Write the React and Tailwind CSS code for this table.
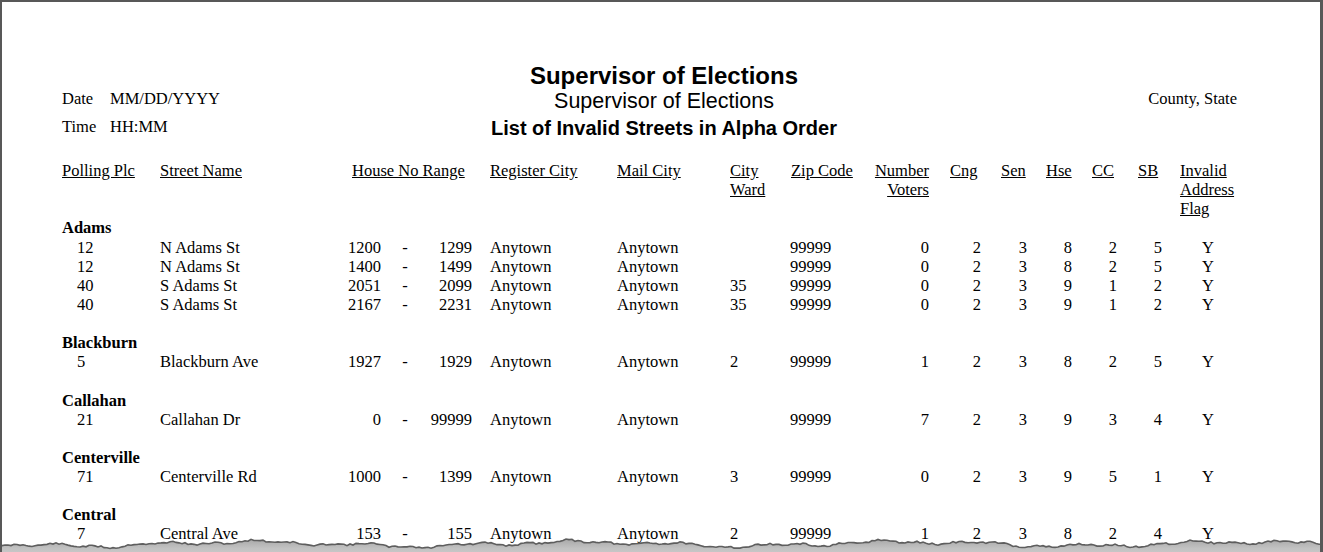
import React from "react";

const groups = [
  {
    name: "Adams",
    rows: [
      ["12", "N Adams St", "1200", "1299", "Anytown", "Anytown", "", "99999", "0", "2", "3", "8", "2", "5", "Y"],
      ["12", "N Adams St", "1400", "1499", "Anytown", "Anytown", "", "99999", "0", "2", "3", "8", "2", "5", "Y"],
      ["40", "S Adams St", "2051", "2099", "Anytown", "Anytown", "35", "99999", "0", "2", "3", "9", "1", "2", "Y"],
      ["40", "S Adams St", "2167", "2231", "Anytown", "Anytown", "35", "99999", "0", "2", "3", "9", "1", "2", "Y"],
    ],
  },
  {
    name: "Blackburn",
    rows: [["5", "Blackburn Ave", "1927", "1929", "Anytown", "Anytown", "2", "99999", "1", "2", "3", "8", "2", "5", "Y"]],
  },
  {
    name: "Callahan",
    rows: [["21", "Callahan Dr", "0", "99999", "Anytown", "Anytown", "", "99999", "7", "2", "3", "9", "3", "4", "Y"]],
  },
  {
    name: "Centerville",
    rows: [["71", "Centerville Rd", "1000", "1399", "Anytown", "Anytown", "3", "99999", "0", "2", "3", "9", "5", "1", "Y"]],
  },
  {
    name: "Central",
    rows: [["7", "Central Ave", "153", "155", "Anytown", "Anytown", "2", "99999", "1", "2", "3", "8", "2", "4", "Y"]],
  },
];

const GRID =
  "grid grid-cols-[98px_182px_148px_127px_113px_60px_70px_69px_52px_46px_45px_45px_45px_78px]";

// torn paper edge
function tornPath() {
  let seed = 11;
  const rnd = () => {
    seed = (seed * 9301 + 49297) % 233280;
    return seed / 233280;
  };
  const pts = [];
  for (let x = -4; x <= 1330; x += 3) {
    const y =
      544 +
      2.0 * Math.sin(x * 0.019) +
      1.4 * Math.sin(x * 0.061 + 1.3) +
      0.9 * Math.sin(x * 0.16 + 2.1) +
      (rnd() - 0.5) * 1.8;
    pts.push([x, y]);
  }
  const line = pts.map((p, i) => `${i ? "L" : "M"}${p[0]} ${p[1].toFixed(2)}`).join(" ");
  const fill = `${line} L1330 560 L-4 560 Z`;
  return { line, fill };
}
const torn = tornPath();

function Header() {
  return (
    <div className={`${GRID} leading-[19.125px]`}>
      <div className="underline">Polling Plc</div>
      <div className="underline">Street Name</div>
      <div className="pl-[10px] whitespace-nowrap underline">House No Range</div>
      <div className="underline">Register City</div>
      <div className="underline">Mail City</div>
      <div className="underline">
        City
        <br />
        Ward
      </div>
      <div className="pl-[1px] underline whitespace-nowrap">Zip Code</div>
      <div className="text-right underline">
        Number
        <br />
        Voters
      </div>
      <div className="pl-[21px] underline">Cng</div>
      <div className="pl-[20px] underline">Sen</div>
      <div className="pl-[19px] underline">Hse</div>
      <div className="pl-[20px] underline">CC</div>
      <div className="pl-[21px] underline">SB</div>
      <div className="pl-[18px] underline">
        Invalid
        <br />
        Address
        <br />
        Flag
      </div>
    </div>
  );
}

function Row({ r }) {
  return (
    <div className={`${GRID} leading-[19.125px] whitespace-nowrap`}>
      <div className="pl-[15px]">{r[0]}</div>
      <div>{r[1]}</div>
      <div className="flex">
        <span className="w-[39px] text-right">{r[2]}</span>
        <span className="w-[48px] text-center">-</span>
        <span className="w-[43px] text-right">{r[3]}</span>
      </div>
      <div>{r[4]}</div>
      <div>{r[5]}</div>
      <div>{r[6]}</div>
      <div>{r[7]}</div>
      <div className="text-right">{r[8]}</div>
      <div className="text-right">{r[9]}</div>
      <div className="text-right">{r[10]}</div>
      <div className="text-right">{r[11]}</div>
      <div className="text-right">{r[12]}</div>
      <div className="text-right">{r[13]}</div>
      <div className="pl-[18px]">
        <div className="w-[56px] text-center">{r[14]}</div>
      </div>
    </div>
  );
}

export default function App() {
  return (
    <div className="relative h-[552px] w-[1323px] overflow-hidden bg-white border-t-2 border-l-2 border-r-[3px] border-[#585858] text-black font-['Liberation_Serif','Times_New_Roman',serif] text-[16.5px]">
      <div className="pl-[60px] pr-[54px] pt-[61px]">
        {/* report heading */}
        <div className="grid grid-cols-[1fr_auto_1fr]">
          <div className="pt-[22px] leading-[28px]">
            <div className="flex">
              <span className="w-[48px]">Date</span>
              <span>MM/DD/YYYY</span>
            </div>
            <div className="flex">
              <span className="w-[48px]">Time</span>
              <span>HH:MM</span>
            </div>
          </div>
          <div className="flex flex-col items-center font-['Liberation_Sans',Arial,sans-serif] whitespace-nowrap">
            <div className="text-[24px] font-bold leading-[25px]">Supervisor of Elections</div>
            <div className="mt-[1px] text-[21.5px] leading-[25px]">Supervisor of Elections</div>
            <div className="mt-[1px] text-[20px] font-bold leading-[26px]">List of Invalid Streets in Alpha Order</div>
          </div>
          <div className="pt-[22px] pr-[29px] text-right leading-[28px]">County, State</div>
        </div>

        {/* table */}
        <div className="mt-[20px]">
          <Header />
          {groups.map((g, gi) => (
            <div key={g.name} className={gi ? "mt-[19.125px]" : ""}>
              <div className="font-bold leading-[19.125px]">{g.name}</div>
              {g.rows.map((r, i) => (
                <Row key={i} r={r} />
              ))}
            </div>
          ))}
        </div>
      </div>

      {/* torn bottom edge of the page */}
      <svg
        className="absolute left-[-2px] top-[-2px]"
        width="1323"
        height="552"
        viewBox="0 0 1323 552"
      >
        <defs>
          <linearGradient id="tornShade" x1="0" y1="0" x2="0" y2="1">
            <stop offset="0" stopColor="#a8a8a8" />
            <stop offset="0.45" stopColor="#c2c2c2" />
            <stop offset="1" stopColor="#cfcfcf" />
          </linearGradient>
        </defs>
        <rect x="0" y="0" width="1323" height="2" fill="#585858" />
        <path d={torn.fill} fill="url(#tornShade)" />
        <path d={torn.line} fill="none" stroke="#5e5e5e" strokeWidth="1.6" />
      </svg>
    </div>
  );
}
